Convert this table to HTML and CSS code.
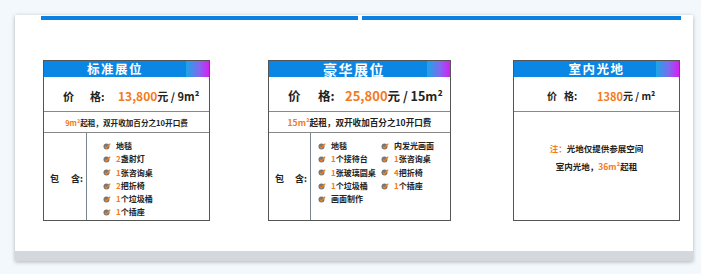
FILE: index.html
```html
<!DOCTYPE html>
<html lang="zh">
<head>
<meta charset="utf-8">
<title>展位价格</title>
<link rel="stylesheet" href="styles.css">
</head>
<body>
<div class="card">
  <div class="bars"><div class="bar bar-a"></div><div class="bar bar-b"></div></div>
  <div class="booths">
    <div class="booth booth-std">
      <div class="head"><span class="head-title">标准展位</span><span class="head-grad"></span></div>
      <div class="price"><span class="lbl">价</span><span class="lbl">格:</span><span class="num">13,800</span>元 / 9m²</div>
      <div class="note"><span class="num">9m²</span>起租，双开收加百分之10开口费</div>
      <div class="incl">
        <div class="incl-label"><span>包</span><span>含:</span></div>
        <ul class="items">
          <li><i class="chk"></i>地毯</li>
          <li><i class="chk"></i><span class="num">2</span>盏射灯</li>
          <li><i class="chk"></i><span class="num">1</span>张咨询桌</li>
          <li><i class="chk"></i><span class="num">2</span>把折椅</li>
          <li><i class="chk"></i><span class="num">1</span>个垃圾桶</li>
          <li><i class="chk"></i><span class="num">1</span>个插座</li>
        </ul>
      </div>
    </div>
    <div class="booth booth-lux">
      <div class="head"><span class="head-title">豪华展位</span><span class="head-grad"></span></div>
      <div class="price"><span class="lbl">价</span><span class="lbl">格:</span><span class="num">25,800</span>元 / 15m²</div>
      <div class="note"><span class="num">15m²</span>起租，双开收加百分之10开口费</div>
      <div class="incl">
        <div class="incl-label"><span>包</span><span>含:</span></div>
        <ul class="items items-2">
          <li><i class="chk"></i>地毯</li>
          <li><i class="chk"></i>内发光画面</li>
          <li><i class="chk"></i><span class="num">1</span>个接待台</li>
          <li><i class="chk"></i><span class="num">1</span>张咨询桌</li>
          <li><i class="chk"></i><span class="num">1</span>张玻璃圆桌</li>
          <li><i class="chk"></i><span class="num">4</span>把折椅</li>
          <li><i class="chk"></i><span class="num">1</span>个垃圾桶</li>
          <li><i class="chk"></i><span class="num">1</span>个插座</li>
          <li><i class="chk"></i>画面制作</li>
        </ul>
      </div>
    </div>
    <div class="booth booth-floor">
      <div class="head"><span class="head-title">室内光地</span><span class="head-grad"></span></div>
      <div class="price"><span class="lbl">价</span><span class="lbl">格:</span><span class="num">1380</span>元 / m²</div>
      <div class="floor-body">
        <p><span class="num">注：</span>光地仅提供参展空间</p>
        <p>室内光地，<span class="num">36m²</span>起租</p>
      </div>
    </div>
  </div>
  <div class="foot"></div>
</div>
</body>
</html>
```

FILE: styles.css
```css
* { box-sizing: border-box; }
html, body { margin: 0; padding: 0; }
body {
  background: #f3f8fc;
  width: 701px;
  height: 274px;
  overflow: hidden;
  font-family: "Noto Sans CJK SC", "Noto Sans", sans-serif;
  color: #222;
}
.card {
  margin: 15px 0 0 15px;
  width: 678px;
  height: 246px;
  background: #fff;
  box-shadow: 0 1px 4px rgba(0, 0, 0, 0.28);
  display: flex;
  flex-direction: column;
}
.bars {
  display: flex;
  gap: 4px;
  margin: 1px 0 0 26px;
}
.bar { height: 4px; background: #0a82e4; }
.bar-a { width: 317px; }
.bar-b { width: 319px; }

.booths {
  display: flex;
  align-items: flex-start;
  margin-top: 40px;
  padding-left: 28px;
}
.booth {
  border: 1px solid #555;
  height: 161px;
  display: flex;
  flex-direction: column;
  background: #fff;
}
.booth-std { width: 167px; }
.booth-lux { width: 183px; margin-left: 58px; }
.booth-floor { width: 167px; margin-left: 62px; }

.head {
  height: 16px;
  display: flex;
  background: #0a86e4;
  color: #fff;
  font-weight: 700;
}
.head-title {
  flex: 1;
  text-align: center;
  font-size: 12.5px;
  line-height: 16px;
  letter-spacing: 1.5px;
}
.head-grad {
  width: 23px;
  background: linear-gradient(90deg, #1aa6e6 0%, #7c6cf0 55%, #d81ef2 100%);
}
.booth-lux .head-title { font-size: 14px; letter-spacing: 1.5px; padding-left: 12px; }
.booth-floor .head-title { padding-left: 23px; }

.price {
  height: 35px;
  border-bottom: 1px solid #888;
  display: flex;
  align-items: center;
  font-size: 11px;
  font-weight: 700;
  padding-left: 19px;
  padding-top: 3px;
}
.price .lbl:first-child { width: 27px; }
.price .lbl:nth-child(2) { width: 28px; }
.num { color: #f47a1c; }
.price .num { font-size: 12px; }
.booth-lux .price { font-size: 12.5px; padding-left: 19px; }
.booth-lux .price .lbl:first-child { width: 30px; }
.booth-lux .price .lbl:nth-child(2) { width: 27px; }
.booth-lux .price .num { font-size: 13px; }
.booth-floor .price { padding-left: 33px; font-size: 10px; }
.booth-floor .price .lbl:first-child { width: 17px; }
.booth-floor .price .lbl:nth-child(2) { width: 33px; }
.booth-floor .price .num { font-size: 11px; }

.note {
  height: 21px;
  border-bottom: 1px solid #888;
  display: flex;
  align-items: center;
  justify-content: center;
  font-size: 7.6px;
  font-weight: 700;
}
.booth-lux .note { font-size: 8.6px; }

.incl {
  flex: 1;
  display: flex;
}
.incl-label {
  width: 43px;
  border-right: 1px solid #7a8592;
  display: flex;
  align-items: center;
  justify-content: space-between;
  padding: 4px 3px 0 6px;
  font-size: 9px;
  font-weight: 700;
}
.booth-lux .incl-label { width: 42px; }
.items {
  list-style: none;
  margin: 0;
  padding: 6px 0 0 16px;
  font-size: 8px;
  font-weight: 700;
  line-height: 13.3px;
}
.items-2 {
  padding-left: 7px;
  display: grid;
  grid-template-columns: 63px auto;
  align-content: start;
}
.items li { display: flex; align-items: center; white-space: nowrap; }
.chk {
  width: 8px;
  height: 8px;
  margin-right: 5px;
  flex: none;
  background:
    url("data:image/svg+xml;utf8,<svg xmlns='http://www.w3.org/2000/svg' width='8' height='8' viewBox='0 0 8 8'><circle cx='3.5' cy='4.5' r='3' fill='%23777'/><path d='M2 4.6 L3.4 6 L7.2 1.6' fill='none' stroke='%23f0821e' stroke-width='1.3'/></svg>") no-repeat;
}

.floor-body {
  flex: 1;
  padding-top: 27px;
  text-align: center;
  font-size: 8.5px;
  font-weight: 700;
}
.floor-body p { margin: 0; line-height: 18px; }

.foot {
  margin-top: auto;
  height: 10px;
  background: #d4d8dc;
}
```
